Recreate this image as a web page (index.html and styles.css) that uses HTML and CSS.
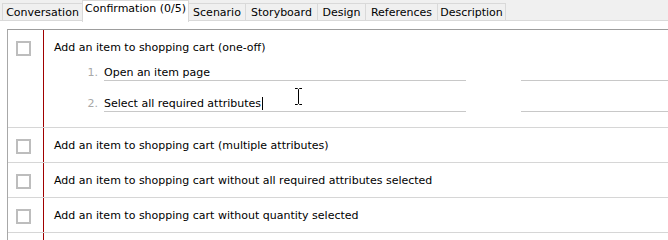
FILE: index.html
```html
<!DOCTYPE html>
<html lang="en">
<head>
  <meta charset="UTF-8">
  <title>Confirmation</title>
  <meta name="viewport" content="width=device-width, initial-scale=1.0">
  <link rel="stylesheet" href="styles.css">
</head>
<body>
  <div class="tabs">
    <div class="tab tab-conversation">Conversation</div>
    <div class="tab tab-confirmation active">Confirmation (0/5)</div>
    <div class="tab tab-scenario">Scenario</div>
    <div class="tab tab-storyboard">Storyboard</div>
    <div class="tab tab-design">Design</div>
    <div class="tab tab-references">References</div>
    <div class="tab tab-description">Description</div>
  </div>

  <div class="panel">
    <div class="checklist">
      <div class="row">
        <div class="check-cell"><span class="checkbox"></span></div>
        <div class="content">
          <div class="title">Add an item to shopping cart (one-off)</div>
          <ol class="steps">
            <li class="step">
              <span class="num">1.</span>
              <span class="field">Open an item page</span>
              <span class="field extra"></span>
            </li>
            <li class="step">
              <span class="num">2.</span>
              <span class="field">Select all required attributes<span class="caret"></span></span>
              <span class="field extra"></span>
            </li>
          </ol>
        </div>
      </div>
      <div class="row">
        <div class="check-cell"><span class="checkbox"></span></div>
        <div class="content"><div class="title">Add an item to shopping cart (multiple attributes)</div></div>
      </div>
      <div class="row">
        <div class="check-cell"><span class="checkbox"></span></div>
        <div class="content"><div class="title">Add an item to shopping cart without all required attributes selected</div></div>
      </div>
      <div class="row">
        <div class="check-cell"><span class="checkbox"></span></div>
        <div class="content"><div class="title">Add an item to shopping cart without quantity selected</div></div>
      </div>
      <div class="row">
        <div class="check-cell"><span class="checkbox"></span></div>
        <div class="content"><div class="title"></div></div>
      </div>
    </div>
  </div>

  <svg class="ibeam" width="9" height="17" viewBox="0 0 9 17">
    <path d="M1 .5h2.5l1 1 1-1H8M4.5 1.5v14M1 16.5h2.5l1-1 1 1H8" fill="none" stroke="#000" stroke-width="1"/>
  </svg>
</body>
</html>
```

FILE: styles.css
```css
body {
  margin: 0;
  font-family: "DejaVu Sans", Verdana, sans-serif;
  font-size: 11px;
  color: #000;
  background-color: #fff;
  position: relative;
  overflow: hidden;
}

/* tab strip */
.tabs {
  display: flex;
  align-items: flex-start;
  height: 20px;
  padding-left: 2px;
  background-color: #f0f0f0;
  border-bottom: 1px solid #d9d9d9;
}
.tab {
  box-sizing: border-box;
  height: 17px;
  margin-top: 3px;
  margin-right: -1px;
  border: 1px solid #d9d9d9;
  border-bottom: none;
  line-height: 17px;
  text-align: center;
  white-space: nowrap;
}
.tab.active {
  position: relative;
  z-index: 1;
  height: 22px;
  margin-top: 0;
  background-color: #fff;
  line-height: 16px;
}
.tab-conversation { width: 81px; }
.tab-confirmation { width: 107px; }
.tab-scenario { width: 58px; }
.tab-storyboard { width: 73px; }
.tab-design { width: 49px; }
.tab-references { width: 73px; }
.tab-description { width: 69px; }

/* checklist */
.panel {
  padding: 8px 0 0 7px;
}
.checklist {
  border-top: 1px solid #9d9d9d;
  border-left: 1px solid #a8a8a8;
}
.row {
  display: flex;
  border-bottom: 1px solid #d6d6d6;
}
.check-cell {
  flex: 0 0 36px;
  box-sizing: border-box;
  padding: 11px 0 0 8px;
  border-right: 1px solid #a00000;
}
.checkbox {
  display: block;
  box-sizing: border-box;
  width: 15px;
  height: 15px;
  border: 2px solid #bdbdbd;
  background-color: #fff;
}
.content {
  flex: 1;
  min-width: 0;
  padding: 9px 0 9px 10px;
}
.title {
  height: 16px;
  line-height: 18px;
  white-space: nowrap;
}
.steps {
  list-style: none;
  margin: 0;
  padding: 0 0 6px 0;
}
.step {
  display: flex;
  align-items: flex-start;
  height: 17px;
  margin-top: 14px;
}
.step:first-child {
  margin-top: 9px;
}
.num {
  width: 44px;
  height: 16px;
  margin-right: 6px;
  text-align: right;
  color: #a8a8a8;
  line-height: 18px;
}
.field {
  width: 362px;
  height: 16px;
  line-height: 18px;
  border-bottom: 1px solid #c8c8c8;
  white-space: nowrap;
}
.field.extra {
  flex: 1;
  width: auto;
  margin-left: 55px;
}
.caret {
  display: inline-block;
  width: 1px;
  height: 13px;
  margin-left: 1px;
  vertical-align: -3px;
  background-color: #000;
}

/* mouse pointer over the text */
.ibeam {
  position: absolute;
  left: 294px;
  top: 88px;
}
```
